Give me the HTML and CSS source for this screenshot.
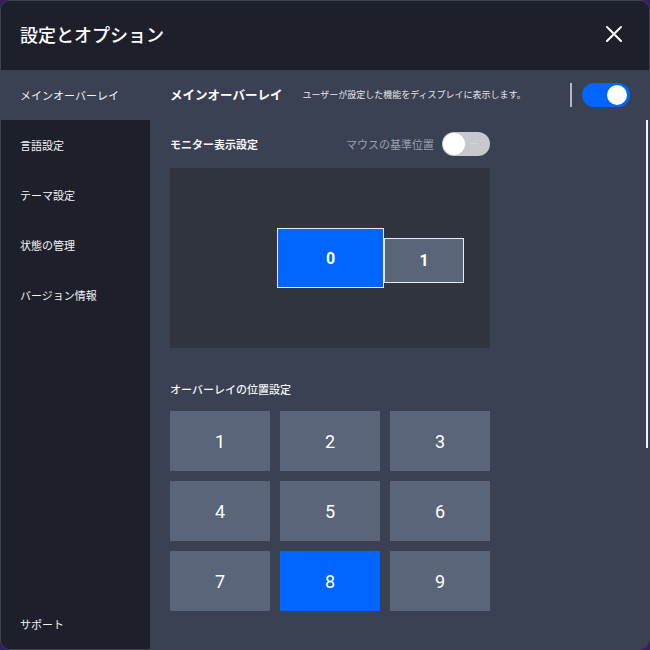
FILE: index.html
```html
<!DOCTYPE html>
<html lang="ja">
<head>
<meta charset="utf-8">
<title>設定とオプション</title>
<link rel="stylesheet" href="styles.css">
</head>
<body>
<div class="window">
  <header class="header">
    <h1 class="title">設定とオプション</h1>
    <button class="close" aria-label="閉じる">
      <svg width="16" height="16" viewBox="0 0 16 16"><path d="M1 1L15 15M15 1L1 15" stroke="#fff" stroke-width="2" stroke-linecap="round"/></svg>
    </button>
  </header>
  <div class="body">
    <nav class="sidebar">
      <div class="nav-item active">メインオーバーレイ</div>
      <div class="nav-item">言語設定</div>
      <div class="nav-item">テーマ設定</div>
      <div class="nav-item">状態の管理</div>
      <div class="nav-item">バージョン情報</div>
      <div class="nav-item support">サポート</div>
    </nav>
    <main class="main">
      <div class="topbar">
        <span class="top-title">メインオーバーレイ</span>
        <span class="top-desc">ユーザーが設定した機能をディスプレイに表示します。</span>
        <span class="sep"></span>
        <span class="toggle on"><span class="knob"></span></span>
      </div>
      <div class="content">
        <div class="section-head">
          <span class="label">モニター表示設定</span>
          <span class="sub">マウスの基準位置</span>
          <span class="toggle off"><span class="dash"></span><span class="knob"></span></span>
        </div>
        <div class="monitors">
          <div class="monitor primary">0</div>
          <div class="monitor secondary">1</div>
        </div>
        <div class="label pos-label">オーバーレイの位置設定</div>
        <div class="grid">
          <div class="cell">1</div>
          <div class="cell">2</div>
          <div class="cell">3</div>
          <div class="cell">4</div>
          <div class="cell">5</div>
          <div class="cell">6</div>
          <div class="cell">7</div>
          <div class="cell selected">8</div>
          <div class="cell">9</div>
        </div>
      </div>
      <div class="scrollbar"></div>
    </main>
  </div>
</div>
</body>
</html>
```

FILE: styles.css
```css
* { box-sizing: border-box; }
html, body {
  margin: 0;
  padding: 0;
  background: #34205e;
  width: 650px;
  height: 650px;
  overflow: hidden;
}
body {
  font-family: Roboto, "Noto Sans CJK JP", sans-serif;
  color: #ffffff;
}
.window {
  width: 650px;
  height: 650px;
  border-radius: 10px;
  overflow: hidden;
  display: flex;
  flex-direction: column;
  background: #1d202b;
  border: 1px solid #3d4150;
}
.header {
  height: 69px;
  flex: none;
  display: flex;
  align-items: center;
  justify-content: space-between;
  padding: 0 19px 3px 19px;
  background: #1d202b;
}
.title {
  margin: 0;
  font-size: 18px;
  font-weight: 500;
  letter-spacing: 0;
  color: #fff;
  line-height: 1;
  font-family: "Noto Sans CJK JP", sans-serif;
}
.close {
  background: none;
  border: 0;
  padding: 0;
  width: 16px;
  height: 16px;
  display: flex;
  margin-right: 8px;
}
.body {
  flex: 1;
  display: flex;
  min-height: 0;
}
.sidebar {
  width: 149px;
  flex: none;
  display: flex;
  flex-direction: column;
  background: #1d202b;
}
.nav-item {
  height: 50px;
  display: flex;
  align-items: center;
  padding-left: 19px;
  font-size: 11px;
  font-family: "Noto Sans CJK JP", sans-serif;
  color: #f2f3f5;
}
.nav-item.active {
  background: #394152;
}
.nav-item.support {
  margin-top: auto;
}
.main {
  flex: 1;
  background: #394152;
  position: relative;
  display: flex;
  flex-direction: column;
}
.topbar {
  height: 50px;
  display: flex;
  align-items: center;
  padding: 0 19px 1px 20px;
}
.top-title {
  font-size: 12.5px;
  font-weight: 700;
  font-family: "Noto Sans CJK JP", sans-serif;
}
.top-desc {
  font-size: 9px;
  margin-left: 20px;
  color: #e6e8ec;
  font-family: "Noto Sans CJK JP", sans-serif;
}
.sep {
  width: 2px;
  height: 24px;
  background: #b4b8c0;
  margin-left: auto;
  margin-right: 10px;
}
.toggle {
  position: relative;
  width: 48px;
  height: 24px;
  border-radius: 12px;
  display: block;
  flex: none;
}
.toggle .knob {
  position: absolute;
  top: 2px;
  width: 20px;
  height: 20px;
  border-radius: 50%;
  background: #fff;
}
.toggle.on { background: #0066ff; }
.toggle.on .knob { right: 3px; }
.toggle.off { background: #c6c8cd; }
.toggle.off .knob { left: 1px; top: 1px; width: 22px; height: 22px; }
.toggle .dash {
  position: absolute;
  right: 12px;
  top: 11px;
  width: 8px;
  height: 1px;
  background: #d3d5d9;
}
.content {
  padding: 12px 0 0 20px;
  display: flex;
  flex-direction: column;
}
.section-head {
  width: 320px;
  height: 24px;
  display: flex;
  align-items: center;
}
.label {
  font-size: 11px;
  font-weight: 700;
  font-family: "Noto Sans CJK JP", sans-serif;
  color: #f4f5f7;
}
.sub {
  margin-left: auto;
  margin-right: 8px;
  font-size: 11px;
  color: #9aa0aa;
  font-family: "Noto Sans CJK JP", sans-serif;
}
.monitors {
  margin-top: 12px;
  width: 320px;
  height: 180px;
  background: #30353f;
  position: relative;
}
.monitor {
  position: absolute;
  border: 1px solid #e8ecf2;
  display: flex;
  align-items: center;
  justify-content: center;
  font-weight: 700;
  font-size: 16px;
}
.monitor.primary {
  left: 107px;
  top: 60px;
  width: 107px;
  height: 60px;
  background: #0066ff;
}
.monitor.secondary {
  left: 214px;
  top: 70px;
  width: 80px;
  height: 45px;
  background: #5a6579;
}
.pos-label {
  margin-top: 33px;
  line-height: 16px;
  font-weight: 500;
}
.grid {
  margin-top: 14px;
  display: grid;
  grid-template-columns: repeat(3, 100px);
  grid-auto-rows: 60px;
  gap: 10px;
}
.cell {
  background: #5a6579;
  display: flex;
  align-items: center;
  justify-content: center;
  font-size: 18px;
  color: #fff;
}
.cell.selected {
  background: #0066ff;
}
.scrollbar {
  position: absolute;
  right: 1px;
  top: 50px;
  width: 2px;
  height: 328px;
  background: #f4f5f7;
}
```
